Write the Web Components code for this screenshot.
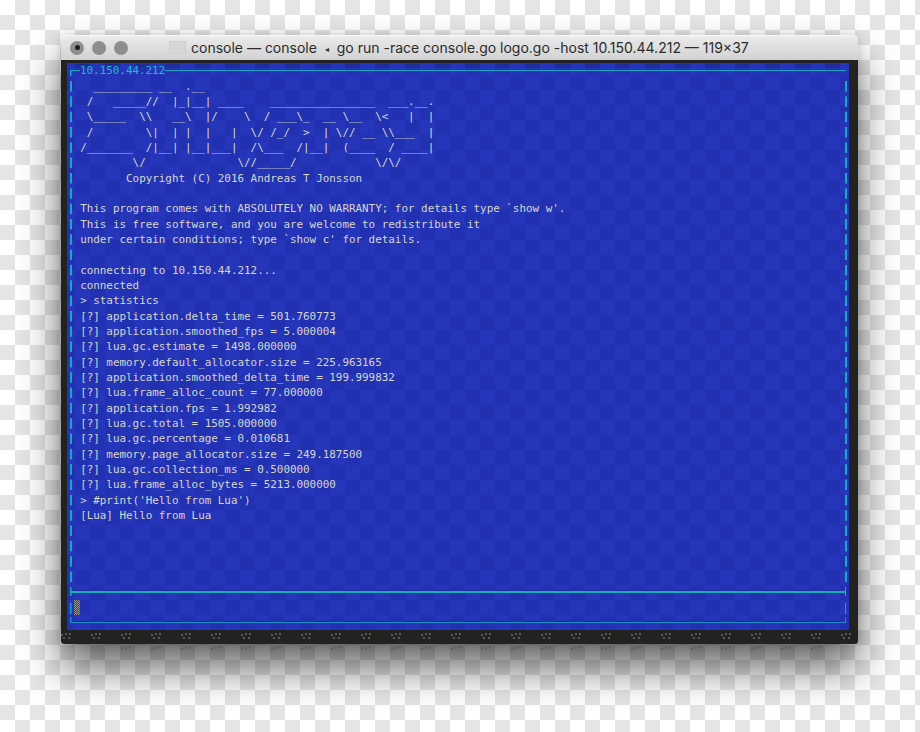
<!DOCTYPE html>
<html>
<head>
<meta charset="utf-8">
<title>console</title>
<style>
    html, body { margin: 0; padding: 0; }
    body {
        min-height: 732px;
        overflow: hidden;
        background-color: #fff;
        background-image: conic-gradient(#e5e5e5 25%, transparent 0 50%, #e5e5e5 0 75%, transparent 0);
        background-size: 30px 30px;
        --row: 15.33px;
    }
</style>
</head>
<body>
<mac-window heading="console — console ◂ go run -race console.go logo.go -host 10.150.44.212 — 119×37">
    <term-screen>
        <term-pane label="10.150.44.212"><term-output>  _________ __  .__
 /   _____//  |_|__| ____    ________________  ___.__.
 \_____  \\   __\  |/    \  / ___\_  __ \__  \&lt;   |  |
 /        \|  | |  |   |  \/ /_/  &gt;  | \// __ \\___  |
/_______  /|__| |__|___|  /\___  /|__|  (____  / ____|
        \/              \//_____/            \/\/
       Copyright (C) 2016 Andreas T Jonsson

This program comes with ABSOLUTELY NO WARRANTY; for details type `show w'.
This is free software, and you are welcome to redistribute it
under certain conditions; type `show c' for details.

connecting to 10.150.44.212...
connected
&gt; statistics
[?] application.delta_time = 501.760773
[?] application.smoothed_fps = 5.000004
[?] lua.gc.estimate = 1498.000000
[?] memory.default_allocator.size = 225.963165
[?] application.smoothed_delta_time = 199.999832
[?] lua.frame_alloc_count = 77.000000
[?] application.fps = 1.992982
[?] lua.gc.total = 1505.000000
[?] lua.gc.percentage = 0.010681
[?] memory.page_allocator.size = 249.187500
[?] lua.gc.collection_ms = 0.500000
[?] lua.frame_alloc_bytes = 5213.000000
&gt; #print('Hello from Lua')
[Lua] Hello from Lua</term-output></term-pane>
        <term-input></term-input>
    </term-screen>
</mac-window>

<script>
const DOTS = (color) => `
    radial-gradient(circle at 5px 4px, ${color} 0.7px, transparent 1px),
    radial-gradient(circle at 9px 3px, ${color} 0.7px, transparent 1px),
    radial-gradient(circle at 13px 3px, ${color} 0.7px, transparent 1px),
    radial-gradient(circle at 7px 7px, ${color} 0.7px, transparent 1px),
    radial-gradient(circle at 12px 7px, ${color} 0.7px, transparent 1px)`;

class MacWindow extends HTMLElement {
    connectedCallback() {
        this.attachShadow({ mode: 'open' });
        const heading = this.getAttribute('heading').replace('◂', '<small>◂</small>');
        this.shadowRoot.innerHTML = `
            <style>
                :host {
                    display: block;
                    position: relative;
                    width: 797px;
                    height: 609px;
                    margin: 35px 0 0 61px;
                    border-radius: 5px 5px 3px 3px;
                    box-shadow: 0 24px 40px rgba(0, 0, 0, 0.6), 0 0 8px rgba(0, 0, 0, 0.14);
                }
                :host::after {
                    content: "";
                    position: absolute;
                    left: 60px;
                    right: 30px;
                    top: 100%;
                    height: 8px;
                    background-image:
                        radial-gradient(circle at 5px 5px, #555 0.6px, transparent 0.9px),
                        radial-gradient(circle at 9px 4px, #555 0.6px, transparent 0.9px),
                        radial-gradient(circle at 13px 3px, #555 0.6px, transparent 0.9px);
                    background-size: 30px 8px;
                    background-repeat: repeat-x;
                    background-position: -4px 0;
                }
                .bar {
                    display: flex;
                    align-items: center;
                    height: 25px;
                    box-sizing: border-box;
                    padding-left: 9px;
                    border-radius: 5px 5px 0 0;
                    background: linear-gradient(#f0f0f0, #e6e6e6 20%, #d2d2d2);
                    box-shadow: inset 0 1px 0 #f8f8f8;
                    font: 14px Inter, sans-serif;
                    color: #2b2b2b;
                    white-space: nowrap;
                }
                small { font-size: 8px; vertical-align: 1px; margin: 0 4px; }
                .light {
                    width: 14px;
                    height: 14px;
                    margin-right: 8px;
                    border-radius: 50%;
                    background: #8e8e8e;
                    display: flex;
                    align-items: center;
                    justify-content: center;
                    flex: none;
                }
                .light.close::after {
                    content: "";
                    width: 5px;
                    height: 5px;
                    border-radius: 50%;
                    background: #1c1c1c;
                }
                .proxy {
                    width: 17px;
                    height: 13px;
                    margin: 0 5px 0 33px;
                    background: #d6d6d6;
                    border: 1px solid #cfcfcf;
                    box-sizing: border-box;
                    flex: none;
                }
                .body {
                    height: 584px;
                    box-sizing: border-box;
                    padding: 3px 9px 0 6px;
                    border-radius: 0 0 3px 3px;
                    background-color: #222220;
                    background-image: ${DOTS('#5a5a5a')};
                    background-size: 30px 10px;
                    background-repeat: repeat-x;
                    background-position: 26px calc(100% - 3px);
                }
            </style>
            <div class="bar">
                <span class="light close"></span>
                <span class="light"></span>
                <span class="light"></span>
                <span class="proxy"></span>
                <span>${heading}</span>
            </div>
            <div class="body"><slot></slot></div>
        `;
    }
}

class TermScreen extends HTMLElement {
    connectedCallback() {
        this.attachShadow({ mode: 'open' });
        const dash = 'linear-gradient(90deg, transparent 15px, #1b2896 0)';
        this.shadowRoot.innerHTML = `
            <style>
                :host {
                    display: block;
                    height: calc(37 * var(--row));
                    background-color: #2636ba;
                    background-image:
                        ${dash}, ${dash}, ${dash}, ${dash},
                        conic-gradient(#2131b1 25%, transparent 0 50%, #2131b1 0 75%, transparent 0);
                    background-size: 30px 1px, 30px 1px, 30px 1px, 30px 1px, 30px 30px;
                    background-repeat: repeat-x, repeat-x, repeat-x, repeat-x, repeat;
                    background-position: -7px 1px, -7px 3px, -7px 527px, -7px 558px, 0 0;
                    background-attachment: scroll, scroll, scroll, scroll, fixed;
                    font: 10.9px/15.33px "DejaVu Sans Mono", monospace;
                    color: #d6d6cc;
                }
            </style>
            <slot></slot>
        `;
    }
}

class TermPane extends HTMLElement {
    connectedCallback() {
        this.attachShadow({ mode: 'open' });
        this.shadowRoot.innerHTML = `
            <style>
                :host {
                    display: block;
                    --line: #1ba6c4;
                }
                .head {
                    display: flex;
                    align-items: center;
                    height: var(--row);
                    padding: 0 3px;
                    background: linear-gradient(var(--line), var(--line)) 3px 8px / 1.5px 5px no-repeat;
                }
                .rule { height: 1px; background: var(--line); }
                .rule.short { width: 10px; flex: none; }
                .rule.long { flex: 1; }
                .label { color: #1fbcc4; }
                .main {
                    height: calc(33 * var(--row));
                    box-sizing: border-box;
                    padding: 0.45px 0 0 13.14px;
                    background:
                        linear-gradient(var(--line) 11px, transparent 0) 3px 3px / 1.5px var(--row) repeat-y,
                        linear-gradient(var(--line) 11px, transparent 0) calc(100% - 3px) 3px / 1.5px var(--row) repeat-y;
                }
            </style>
            <div class="head">
                <span class="rule short"></span>
                <span class="label">${this.getAttribute('label')}</span>
                <span class="rule long"></span>
            </div>
            <div class="main"><slot></slot></div>
        `;
    }
}

class TermOutput extends HTMLElement {
    connectedCallback() {
        this.attachShadow({ mode: 'open' });
        this.shadowRoot.innerHTML = `
            <style>
                :host { display: block; }
                slot { white-space: pre; }
            </style>
            <slot></slot>
        `;
    }
}

class TermInput extends HTMLElement {
    connectedCallback() {
        this.attachShadow({ mode: 'open' });
        this.shadowRoot.innerHTML = `
            <style>
                :host {
                    display: block;
                    height: calc(3 * var(--row));
                    box-sizing: border-box;
                    padding: 0 3px;
                    --teal: #15afb4;
                    --blue: #1a8fc4;
                }
                .edge {
                    height: var(--row);
                    display: flex;
                    align-items: center;
                }
                .edge span {
                    flex: 1;
                    height: 1.5px;
                }
                .split {
                    background:
                        linear-gradient(var(--teal), var(--teal)) 0 3px / 1.5px 9px no-repeat,
                        linear-gradient(var(--teal), var(--teal)) 100% 3px / 1.5px 9px no-repeat;
                }
                .split span { background: var(--teal); }
                .close {
                    background:
                        linear-gradient(var(--blue), var(--blue)) 0 2px / 1.5px 6px no-repeat,
                        linear-gradient(var(--blue), var(--blue)) 100% 2px / 1.5px 6px no-repeat;
                }
                .close span { background: var(--blue); }
                .prompt {
                    height: var(--row);
                    padding-left: 3.6px;
                    background:
                        linear-gradient(#1b9fcb 11px, transparent 0) 0 3px / 1.5px var(--row) no-repeat,
                        linear-gradient(#1b9fcb 11px, transparent 0) 100% 3px / 1.5px var(--row) no-repeat;
                }
                .cursor {
                    display: block;
                    width: 6.5px;
                    height: 100%;
                    background: conic-gradient(#4a4a4a 25%, #8e8e8e 0 50%, #4a4a4a 0 75%, #8e8e8e 0) 0 0 / 2px 2px;
                }
            </style>
            <div class="edge split"><span></span></div>
            <div class="prompt"><i class="cursor"></i></div>
            <div class="edge close"><span></span></div>
        `;
    }
}

customElements.define('mac-window', MacWindow);
customElements.define('term-screen', TermScreen);
customElements.define('term-pane', TermPane);
customElements.define('term-output', TermOutput);
customElements.define('term-input', TermInput);
</script>
</body>
</html>
